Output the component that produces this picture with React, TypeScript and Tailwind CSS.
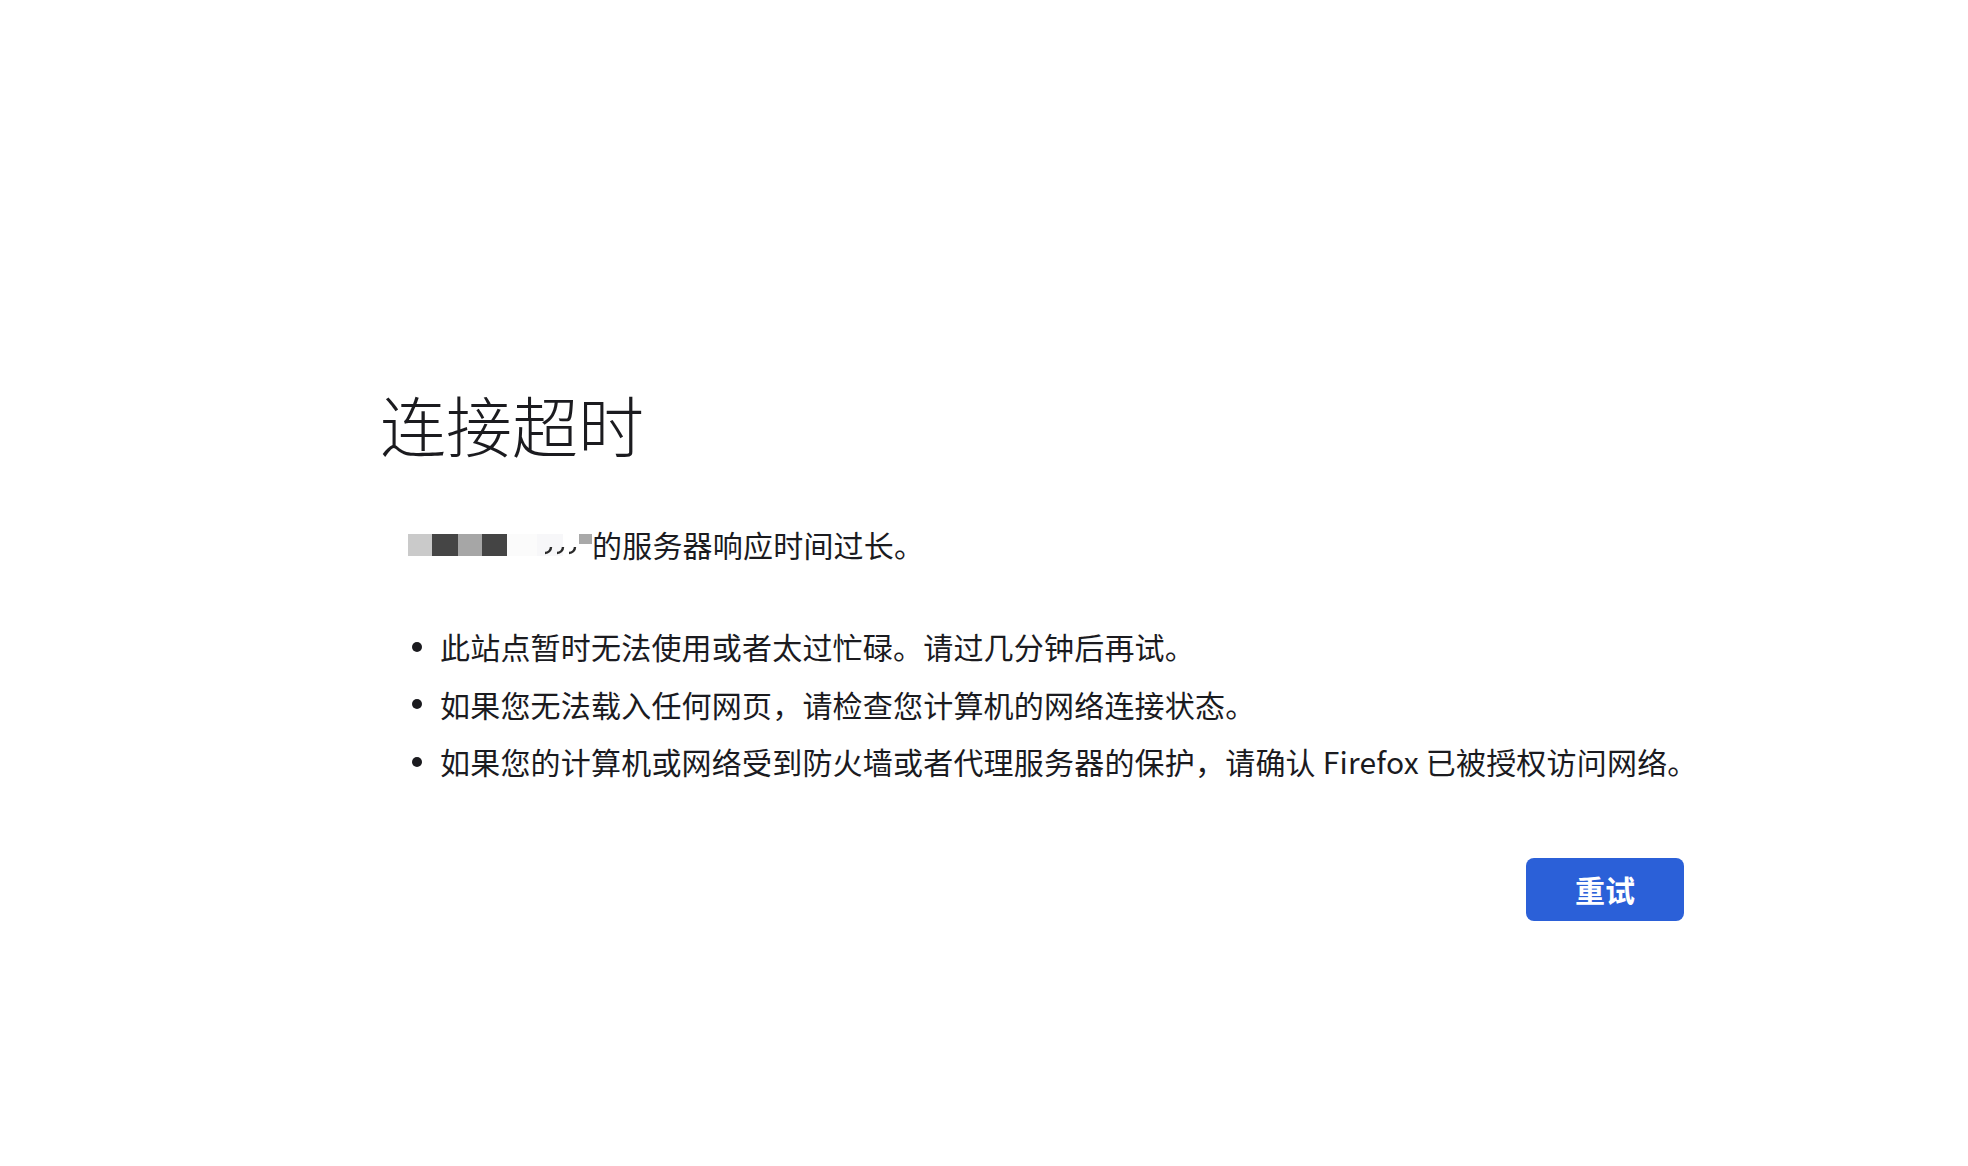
import React from "react";

const font = {
  fontFamily: '"Noto Sans CJK SC", "Noto Sans", sans-serif',
};

function Bullet({ children }: { children: React.ReactNode }) {
  return (
    <li className="flex items-center leading-[57.5px] pl-[32px] gap-[18px] whitespace-nowrap">
      <span className="w-[10px] h-[10px] rounded-full bg-[#1b1b1f] shrink-0" />
      <span>{children}</span>
    </li>
  );
}

export default function App() {
  return (
    <div className="min-h-screen w-full bg-white text-[#1b1b1f]" style={font}>
      <div className="pt-[383px] pl-[380px]">
        <div className="w-[1304px]">
          <h1 className="text-[66px] font-light leading-[80px] tracking-normal">连接超时</h1>

          <div className="mt-[61px] flex items-center h-[40px] text-[30px] leading-[40px] tracking-[0.2px]">
            <div className="w-[28px] shrink-0" />
            <div className="flex items-center h-[22px] mt-[2px]">
              <div className="w-[24px] h-[22px] bg-[#cacaca]" />
              <div className="w-[26px] h-[22px] bg-[#454545]" />
              <div className="w-[24px] h-[22px] bg-[#a6a6a6]" />
              <div className="w-[25px] h-[22px] bg-[#444444]" />
              <div className="w-[30px] h-[22px] bg-[#fbfbfb]" />
              <div className="w-[26px] h-[22px] bg-[#f7f7f9]" />
              <svg width="40" height="22" viewBox="0 0 40 22" className="-ml-[24px]">
                <path d="M12 13 A6 6 0 0 1 6 19" stroke="#2a2a2a" strokeWidth="2.4" fill="none" />
                <path d="M24 13 A6 6 0 0 1 18 19" stroke="#2a2a2a" strokeWidth="2.4" fill="none" />
                <path d="M36 13 A6 6 0 0 1 30 19" stroke="#2a2a2a" strokeWidth="2.4" fill="none" />
              </svg>
              <div className="w-[13px] h-[22px] flex flex-col">
                <div className="w-[13px] h-[10px] bg-[#a9a9a9]" />
              </div>
            </div>
            <span>的服务器响应时间过长。</span>
          </div>

          <ul className="mt-[54px] text-[30px] tracking-[0.2px]">
            <Bullet>此站点暂时无法使用或者太过忙碌。请过几分钟后再试。</Bullet>
            <Bullet>如果您无法载入任何网页，请检查您计算机的网络连接状态。</Bullet>
            <Bullet>如果您的计算机或网络受到防火墙或者代理服务器的保护，请确认 Firefox 已被授权访问网络。</Bullet>
          </ul>

          <div className="mt-[67px] flex justify-end">
            <button className="w-[158px] h-[63px] rounded-[8px] bg-[#2b60d8] text-white text-[30px] font-bold flex items-center justify-center">
              重试
            </button>
          </div>
        </div>
      </div>
    </div>
  );
}
